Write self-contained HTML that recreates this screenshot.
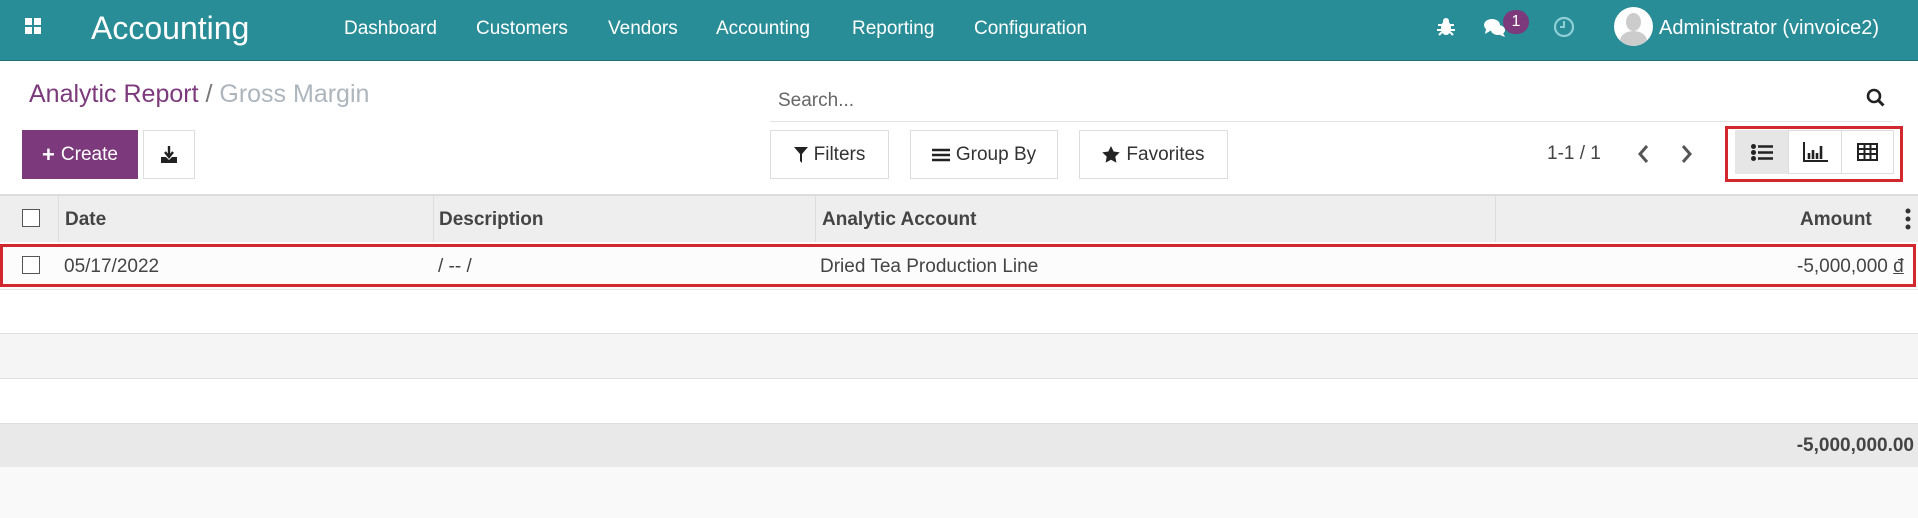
<!DOCTYPE html>
<html><head><meta charset="utf-8"><style>
*{margin:0;padding:0;box-sizing:border-box}
body{width:1918px;height:518px;overflow:hidden;font-family:"Liberation Sans",sans-serif;background:#f9f9f9;position:relative;color:#4c4c4c}
.a{position:absolute;white-space:nowrap}
.nav{left:0;top:0;width:1918px;height:61px;background:#298d98;border-bottom:1px solid #1f6e76}
.ctl{left:0;top:61px;width:1918px;height:135px;background:#fff}
.btn{border:1px solid #ddd;background:#fff;height:49px;top:130px;font-size:19px;color:#333;display:flex;align-items:center;justify-content:center;gap:6px}
.row{left:0;width:1918px}
.cb{width:18px;height:18px;border:1.5px solid #555;background:#fff}
.sep{width:1px;background:#ddd;top:196px;height:46px}
</style></head><body>
<div class="a nav"></div>
<svg class="a" style="left:25px;top:18px" width="17" height="17"><rect x="0" y="0" width="7" height="7" fill="#fff"/><rect x="9" y="0" width="7" height="7" fill="#fff"/><rect x="0" y="9" width="7" height="7" fill="#fff"/><rect x="9" y="9" width="7" height="7" fill="#fff"/></svg>
<div class="a" style="left:91px;top:10px;color:#fff;font-size:32px">Accounting</div>
<div class="a" style="left:344px;color:#fff;font-size:19px;top:18px">Dashboard</div>
<div class="a" style="left:476px;color:#fff;font-size:19px;top:18px">Customers</div>
<div class="a" style="left:608px;color:#fff;font-size:19px;top:18px">Vendors</div>
<div class="a" style="left:716px;color:#fff;font-size:19px;top:18px">Accounting</div>
<div class="a" style="left:852px;color:#fff;font-size:19px;top:18px">Reporting</div>
<div class="a" style="left:974px;color:#fff;font-size:19px;top:18px">Configuration</div>
<svg class="a" style="left:1436px;top:17px" width="20" height="20" viewBox="0 0 20 20" fill="#fff"><ellipse cx="10" cy="11" rx="5" ry="7"/><circle cx="10" cy="4" r="3"/><path d="M2 8h16M1 13h18M3 18l3-3M17 18l-3-3" stroke="#fff" stroke-width="2"/></svg>
<svg class="a" style="left:1483px;top:17px" width="26" height="22" viewBox="0 0 26 22" fill="#fff"><ellipse cx="9" cy="8" rx="8" ry="6"/><path d="M3 12l-1 5 5-3z"/><ellipse cx="15" cy="13" rx="7" ry="5"/><path d="M20 16l2 4-5-2z"/></svg>
<div class="a" style="left:1503px;top:10px;width:26px;height:24px;border-radius:12px;background:#7c3a7c;color:#fff;font-size:16px;text-align:center;line-height:24px">1</div>
<svg class="a" style="left:1553px;top:16px" width="22" height="22" viewBox="0 0 22 22"><circle cx="11" cy="11" r="9" fill="none" stroke="#8fcfd6" stroke-width="2.2"/><path d="M11 5v6H7" fill="none" stroke="#8fcfd6" stroke-width="2"/></svg>
<div class="a" style="left:1614px;top:7px;width:39px;height:39px;border-radius:50%;background:#fff;overflow:hidden"><div style="position:absolute;left:12px;top:6px;width:15px;height:18px;border-radius:50%;background:#ccc"></div><div style="position:absolute;left:6px;top:24px;width:27px;height:20px;border-radius:50% 50% 0 0;background:#ccc"></div></div>
<div class="a" style="left:1659px;top:17px;color:#fff;font-size:20px">Administrator (vinvoice2)</div>

<div class="a ctl"></div>
<div class="a" style="left:29px;top:80px;font-size:25px;color:#7c3a7c">Analytic Report <span style="color:#777">/</span> <span style="color:#adb5bd">Gross Margin</span></div>
<div class="a" style="left:778px;top:90px;font-size:19px;color:#666">Search...</div>
<div class="a" style="left:770px;top:121px;width:1123px;height:1px;background:#e3e3e3"></div>
<svg class="a" style="left:1866px;top:88px" width="20" height="20" viewBox="0 0 20 20"><circle cx="8" cy="8" r="6" fill="none" stroke="#222" stroke-width="2.6"/><path d="M12.5 12.5l5 5" stroke="#222" stroke-width="3"/></svg>

<div class="a btn" style="left:22px;width:116px;background:#7c3a7c;border-color:#7c3a7c;color:#fff"><b style="font-size:22px">+</b>Create</div>
<div class="a btn" style="left:143px;width:52px"><svg width="20" height="20" viewBox="0 0 20 20"><path d="M10 1v10M6 7l4 5 4-5" stroke="#222" stroke-width="2.4" fill="none"/><path d="M2 12h5l3 3 3-3h5v6H2z" fill="#222"/></svg></div>
<div class="a btn" style="left:770px;width:119px"><svg width="14" height="16" viewBox="0 0 14 16"><path d="M0 0h14L8 7v9L6 14V7z" fill="#222"/></svg>Filters</div>
<div class="a btn" style="left:910px;width:148px"><svg width="18" height="14"><path d="M0 2h18M0 7h18M0 12h18" stroke="#222" stroke-width="2.5"/></svg>Group By</div>
<div class="a btn" style="left:1079px;width:149px"><svg width="18" height="17" viewBox="0 0 24 23"><path d="M12 0l3.6 7.5 8.2 1.1-6 5.7 1.5 8.2L12 18.6 4.7 22.5l1.5-8.2-6-5.7 8.2-1.1z" fill="#222"/></svg>Favorites</div>
<div class="a" style="left:1547px;top:143px;font-size:19px;color:#444">1-1 / 1</div>
<svg class="a" style="left:1636px;top:144px" width="14" height="20"><path d="M11 2L4 10l7 8" stroke="#555" stroke-width="3" fill="none"/></svg>
<svg class="a" style="left:1680px;top:144px" width="14" height="20"><path d="M3 2l7 8-7 8" stroke="#555" stroke-width="3" fill="none"/></svg>
<div class="a" style="left:1725px;top:126px;width:178px;height:56px;border:3px solid #d3272e"></div>
<div class="a" style="left:1735px;top:130px;width:159px;height:44px;border:1px solid #ddd;background:#fff"></div>
<div class="a" style="left:1735px;top:130px;width:53px;height:44px;background:#e6e6e6"></div>
<div class="a" style="left:1788px;top:130px;width:1px;height:44px;background:#ddd"></div>
<div class="a" style="left:1841px;top:130px;width:1px;height:44px;background:#ddd"></div>
<svg class="a" style="left:1751px;top:144px" width="22" height="17"><circle cx="2.5" cy="2.5" r="2.5" fill="#222"/><circle cx="2.5" cy="8.5" r="2.5" fill="#222"/><circle cx="2.5" cy="14.5" r="2.5" fill="#222"/><path d="M7 2.5h15M7 8.5h15M7 14.5h15" stroke="#222" stroke-width="2.6"/></svg>
<svg class="a" style="left:1803px;top:142px" width="25" height="20"><path d="M1 0v19h24" stroke="#222" stroke-width="2" fill="none"/><path d="M6 11v6M10 8v9M14 11v6M18 4v13" stroke="#222" stroke-width="2.6"/></svg>
<svg class="a" style="left:1857px;top:143px" width="21" height="18"><rect x="1" y="1" width="19" height="16" fill="none" stroke="#222" stroke-width="2"/><path d="M1 6h19M1 11h19M7.5 1v16M13.5 1v16" stroke="#222" stroke-width="2"/></svg>

<div class="a row" style="top:194px;height:2px;background:#dcdcdc"></div>
<div class="a row" style="top:196px;height:46px;background:#eeeeee"></div>
<div class="a sep" style="left:58px"></div><div class="a sep" style="left:433px"></div><div class="a sep" style="left:815px"></div><div class="a sep" style="left:1495px"></div>
<div class="a cb" style="left:22px;top:209px"></div>
<div class="a" style="left:65px;top:209px;font-size:19px;font-weight:bold;color:#444">Date</div>
<div class="a" style="left:439px;top:209px;font-size:19px;font-weight:bold;color:#444">Description</div>
<div class="a" style="left:822px;top:209px;font-size:19px;font-weight:bold;color:#444">Analytic Account</div>
<div class="a" style="left:1800px;top:209px;font-size:19px;font-weight:bold;color:#444">Amount</div>
<svg class="a" style="left:1905px;top:208px" width="6" height="22"><circle cx="3" cy="3" r="2.5" fill="#333"/><circle cx="3" cy="11" r="2.5" fill="#333"/><circle cx="3" cy="19" r="2.5" fill="#333"/></svg>

<div class="a row" style="top:242px;height:47px;background:#fcfcfc"></div>
<div class="a" style="left:0;top:244px;width:1916px;height:43px;border:3px solid #d3272e"></div>
<div class="a cb" style="left:22px;top:256px"></div>
<div class="a" style="left:64px;top:256px;font-size:19px;color:#444">05/17/2022</div>
<div class="a" style="left:438px;top:256px;font-size:19px;color:#444">/ -- /</div>
<div class="a" style="left:820px;top:256px;font-size:19px;color:#444">Dried Tea Production Line</div>
<div class="a" style="left:1797px;top:256px;font-size:19px;color:#444">-5,000,000 <u>đ</u></div>

<div class="a row" style="top:289px;height:44px;background:#fff;border-top:1px solid #e6e6e6"></div>
<div class="a row" style="top:333px;height:45px;background:#f5f5f5;border-top:1px solid #e0e0e0"></div>
<div class="a row" style="top:378px;height:45px;background:#fff;border-top:1px solid #e0e0e0"></div>
<div class="a row" style="top:423px;height:44px;background:#e9e9e9;border-top:1px solid #ddd"></div>
<div class="a" style="right:4px;top:435px;font-size:19px;font-weight:bold;color:#444">-5,000,000.00</div>
</body></html>
